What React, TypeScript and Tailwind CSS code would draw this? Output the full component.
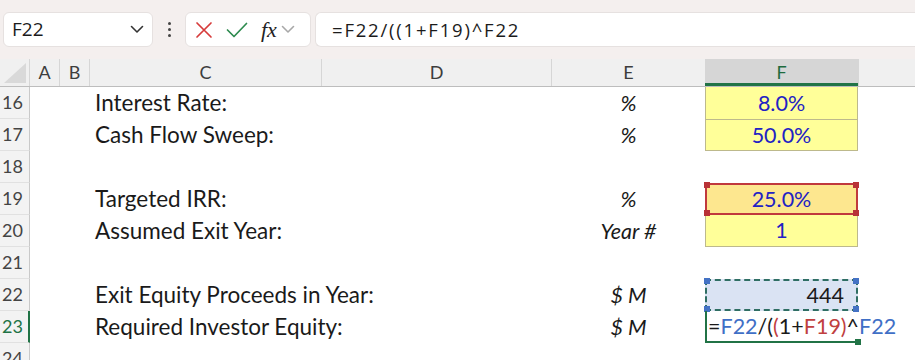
import { ReactNode } from "react";

const ChevronDown = ({ className }: { className?: string }) => (
  <svg className={className} width="14" height="9" viewBox="0 0 14 9" fill="none">
    <path d="M1.5 1.5 L7 7 L12.5 1.5" stroke="currentColor" strokeWidth="1.6" strokeLinecap="round" strokeLinejoin="round" />
  </svg>
);

const Corner = ({ pos, color }: { pos: string; color: string }) => (
  <span className={`absolute w-[6px] h-[6px] ${pos} ${color}`} />
);

const RowHead = ({ n, active }: { n: number; active?: boolean }) => (
  <div
    className={`w-[30px] shrink-0 h-full flex items-center pl-[2px] text-[18px] bg-[#f3f3f3] border-b border-[#e1e1e1] ${
      active ? "text-[#217346] border-r-2 border-r-[#217346]" : "text-[#444] border-r border-r-[#c9c9c9]"
    }`}
  >
    {n}
  </div>
);

type RowProps = { n: number; label?: string; unit?: string; f?: ReactNode; active?: boolean };

const Row = ({ n, label, unit, f, active }: RowProps) => (
  <div className="flex h-[32px]">
    <RowHead n={n} active={active} />
    <div className="w-[60px] shrink-0" />
    <div className="w-[232px] shrink-0 flex items-center pl-[5px] text-[22.5px] text-[#1a1a1a] whitespace-nowrap">
      {label}
    </div>
    <div className="w-[230px] shrink-0" />
    <div className="w-[153px] shrink-0 flex items-center justify-center text-[21.5px] italic text-[#1a1a1a] whitespace-pre">
      {unit}
    </div>
    <div className="w-[153px] shrink-0 h-full">{f}</div>
    <div className="flex-1" />
  </div>
);

const YellowCell = ({ v, top, bottom }: { v: string; top?: boolean; bottom?: boolean }) => (
  <div
    className={`h-full flex items-center justify-center bg-[#ffff99] text-[21.5px] text-[#2222c4] border-x border-[#bdb98c] ${
      top ? "border-t" : ""
    } ${bottom ? "border-b" : ""}`}
  >
    {v}
  </div>
);

const B = ({ children }: { children: ReactNode }) => <span className="text-[#3f6fc6]">{children}</span>;
const R = ({ children }: { children: ReactNode }) => <span className="text-[#c0403f]">{children}</span>;

export default function App() {
  return (
    <div className="w-[915px] h-[360px] overflow-hidden bg-white font-['Lato',sans-serif]">
      {/* toolbar */}
      <div className="h-[59px] bg-[#f4efee] flex items-center pl-[3px] gap-[4px] font-['Open_Sans',sans-serif]">
        <div className="w-[150px] h-[35px] bg-white rounded-[6px] border border-[#e6e1e0] flex items-center justify-between pl-[8px] pr-[8px]">
          <span className="text-[19px] text-[#1b1b1b]">F22</span>
          <ChevronDown className="text-[#333]" />
        </div>
        <div className="w-[24px] flex flex-col items-center gap-[3px]">
          <span className="w-[3px] h-[3px] rounded-full bg-[#444]" />
          <span className="w-[3px] h-[3px] rounded-full bg-[#444]" />
          <span className="w-[3px] h-[3px] rounded-full bg-[#444]" />
        </div>
        <div className="w-[126px] h-[35px] bg-white rounded-[6px] border border-[#e6e1e0] flex items-center pl-[9px] gap-[13px]">
          <svg width="18" height="18" viewBox="0 0 18 18">
            <path d="M2 2 L16 16 M16 2 L2 16" stroke="#d63b3b" strokeWidth="1.7" strokeLinecap="round" />
          </svg>
          <svg width="22" height="16" viewBox="0 0 22 16">
            <path d="M1.5 8 L8 14.5 L20.5 1.5" stroke="#2e8b4f" strokeWidth="1.7" fill="none" strokeLinecap="round" strokeLinejoin="round" />
          </svg>
          <div className="flex items-center gap-[4px]">
            <span className="font-['Liberation_Serif',serif] italic text-[22px] text-[#222] leading-none">fx</span>
            <ChevronDown className="text-[#a8a8a8]" />
          </div>
        </div>
        <div className="flex-1 h-[35px] bg-white rounded-l-[6px] border border-r-0 border-[#e6e1e0] flex items-center pl-[16px]">
          <span className="text-[18.5px] tracking-[1.8px] text-[#1b1b1b]">=F22/((1+F19)^F22</span>
        </div>
      </div>

      {/* column headers */}
      <div className="flex h-[28px] bg-[#f0f0f0] border-b border-[#bdbdbd] text-[18px] text-[#3d3d3d]">
        <div className="w-[30px] shrink-0 border-r border-[#d6d6d6] flex items-end justify-end p-[3px]">
          <svg width="22" height="20" viewBox="0 0 22 20">
            <path d="M22 0 L22 20 L0 20 Z" fill="#d9d9d9" />
          </svg>
        </div>
        <div className="w-[30px] shrink-0 border-r border-[#d6d6d6] flex items-center justify-center">A</div>
        <div className="w-[30px] shrink-0 border-r border-[#d6d6d6] flex items-center justify-center">B</div>
        <div className="w-[232px] shrink-0 border-r border-[#d6d6d6] flex items-center justify-center">C</div>
        <div className="w-[230px] shrink-0 border-r border-[#d6d6d6] flex items-center justify-center">D</div>
        <div className="w-[153px] shrink-0 flex items-center justify-center">E</div>
        <div className="w-[153px] shrink-0 bg-[#d6d6d6] border-b-[3px] border-[#217346] flex items-center justify-center text-[#1e6b3e] pt-[2px]">
          F
        </div>
        <div className="flex-1 border-l border-[#d6d6d6]" />
      </div>

      <Row n={16} label="Interest Rate:" unit="%" f={<YellowCell v="8.0%" />} />
      <Row n={17} label="Cash Flow Sweep:" unit="%" f={<YellowCell v="50.0%" top bottom />} />
      <Row n={18} />
      <Row
        n={19}
        label="Targeted IRR:"
        unit="%"
        f={
          <div className="relative h-full flex items-center justify-center bg-[#fde78f] border-[2.5px] border-[#c0393d] text-[21.5px] text-[#2222c4]">
            25.0%
            <Corner pos="-top-[3px] -left-[3px]" color="bg-[#b83236]" />
            <Corner pos="-top-[3px] -right-[3px]" color="bg-[#b83236]" />
            <Corner pos="-bottom-[3px] -left-[3px]" color="bg-[#b83236]" />
            <Corner pos="-bottom-[3px] -right-[3px]" color="bg-[#b83236]" />
          </div>
        }
      />
      <Row n={20} label="Assumed Exit Year:" unit="Year #" f={<YellowCell v="1" bottom />} />
      <Row n={21} />
      <Row
        n={22}
        label="Exit Equity Proceeds in Year:"
        unit="$ M"
        f={
          <div className="relative h-full flex items-center justify-end pr-[12px] bg-[#dae3f3] border-2 border-dashed border-[#2f6e63] text-[21.5px] text-[#1a1a1a]">
            444
            <Corner pos="-top-[3px] -left-[3px]" color="bg-[#4472c4]" />
            <Corner pos="-top-[3px] -right-[3px]" color="bg-[#4472c4]" />
            <Corner pos="-bottom-[3px] -left-[3px]" color="bg-[#4472c4]" />
            <Corner pos="-bottom-[3px] -right-[3px]" color="bg-[#4472c4]" />
          </div>
        }
      />
      <Row
        n={23}
        active
        label="Required Investor Equity:"
        unit="$ M"
        f={
          <div className="relative h-full flex items-center pl-[1px] border-l-2 border-b-2 border-[#217346] text-[21.5px] text-[#1a1a1a] whitespace-nowrap overflow-visible">
            <span>
              =<B>F22</B>/(<R>(</R>1+<R>F19)</R>^<B>F22</B>
            </span>
            <span className="absolute -bottom-[4px] -right-[3px] w-[6px] h-[6px] bg-[#217346]" />
          </div>
        }
      />
      <Row n={24} />
    </div>
  );
}
